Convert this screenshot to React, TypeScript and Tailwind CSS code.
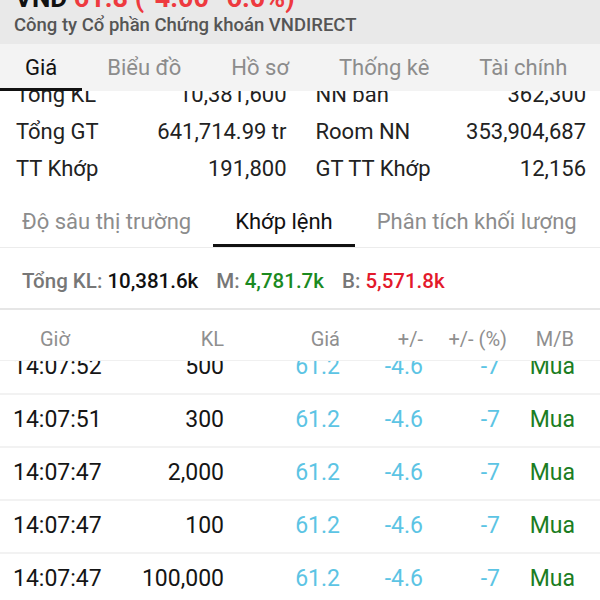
const topTabs = ["Giá", "Biểu đồ", "Hồ sơ", "Thống kê", "Tài chính"];
const subTabs = ["Độ sâu thị trường", "Khớp lệnh", "Phân tích khối lượng"];

const stats = [
  ["Tổng KL", "10,381,600", "NN bán", "362,300"],
  ["Tổng GT", "641,714.99 tr", "Room NN", "353,904,687"],
  ["TT Khớp", "191,800", "GT TT Khớp", "12,156"],
];

const trades = [
  { time: "14:07:52", vol: "500" },
  { time: "14:07:51", vol: "300" },
  { time: "14:07:47", vol: "2,000" },
  { time: "14:07:47", vol: "100" },
  { time: "14:07:47", vol: "100,000" },
];

export default function App() {
  return (
    <div className="h-[600px] w-[600px] overflow-hidden bg-white font-['Roboto',sans-serif]">
      {/* stock header, scrolled up */}
      <div className="h-[44px] overflow-hidden bg-[#e9e9e9] pl-[15px]">
        <div className="-mt-[17px] h-[30px] font-bold leading-[30px]">
          <span className="text-[26px] text-[#111]">VND </span>
          <span className="text-[27px] text-[#ee3a3f]">61.8 (-4.00 -6.0%)</span>
        </div>
        <div className="-ml-[1px] text-[18.5px] font-medium leading-[24px] text-[#555]">
          Công ty Cổ phần Chứng khoán VNDIRECT
        </div>
      </div>

      <div className="flex h-[47px] bg-[#f3f3f3]">
        {topTabs.map((t, i) => (
          <div
            key={t}
            className={
              "shrink-0 border-b-[3px] px-[25px] pt-[10px] text-[22px] leading-[28px] " +
              (i === 0 ? "border-[#111] text-[#111]" : "border-transparent text-[#8c8c8c]")
            }
          >
            {t}
          </div>
        ))}
      </div>

      {/* price stats, partly hidden under the tab bar */}
      <div className="h-[109px] overflow-hidden">
        <div className="-mt-[15px] pl-[16px] pr-[14px] text-[22px] text-[#222]">
          {stats.map((r) => (
            <div key={r[0]} className="grid h-[37px] grid-cols-2 items-center gap-x-[29px]">
              <div className="flex justify-between">
                <span>{r[0]}</span>
                <span>{r[1]}</span>
              </div>
              <div className="flex justify-between">
                <span>{r[2]}</span>
                <span>{r[3]}</span>
              </div>
            </div>
          ))}
        </div>
      </div>

      <div className="flex h-[48px] border-b border-[#ececec]">
        {subTabs.map((t, i) => (
          <div
            key={t}
            className={
              "shrink-0 border-b-[3px] px-[22px] pt-[7px] text-[22px] leading-[30px] " +
              (i === 1 ? "border-[#111] text-[#111]" : "border-transparent text-[#8c8c8c]")
            }
          >
            {t}
          </div>
        ))}
      </div>

      <div className="flex h-[62px] items-center gap-[18px] border-b-2 border-[#e6e6e6] pl-[22px] pt-[6px] text-[20.5px] font-medium">
        <span>
          <span className="text-[#777]">Tổng KL: </span>
          <span className="text-[#111]">10,381.6k</span>
        </span>
        <span>
          <span className="text-[#777]">M: </span>
          <span className="text-[#1b8a1f]">4,781.7k</span>
        </span>
        <span>
          <span className="text-[#777]">B: </span>
          <span className="text-[#e3192b]">5,571.8k</span>
        </span>
      </div>

      <div className="grid h-[51px] grid-cols-[107px_104px_116px_83px_84px_67px] items-center border-b border-[#f0f0f0] pl-[13px] pt-[8px] text-[20px] text-[#8f8f8f]">
        <span className="pl-[27px]">Giờ</span>
        <span className="text-right">KL</span>
        <span className="text-right">Giá</span>
        <span className="text-right">+/-</span>
        <span className="text-right">+/- (%)</span>
        <span className="text-right">M/B</span>
      </div>

      <div className="h-[240px] overflow-hidden">
        <div className="-mt-[19px]">
          {trades.map((r, i) => (
            <div
              key={i}
              className="grid h-[53px] grid-cols-[107px_104px_116px_83px_77px_75px] items-center border-b-2 border-[#f2f2f2] pl-[13px] text-[23px]"
            >
              <span className="text-[#151515]">{r.time}</span>
              <span className="text-right text-[#151515]">{r.vol}</span>
              <span className="text-right text-[#5cc4e4]">61.2</span>
              <span className="text-right text-[#5cc4e4]">-4.6</span>
              <span className="text-right text-[#5cc4e4]">-7</span>
              <span className="text-right text-[#1b7d22]">Mua</span>
            </div>
          ))}
        </div>
      </div>
    </div>
  );
}
